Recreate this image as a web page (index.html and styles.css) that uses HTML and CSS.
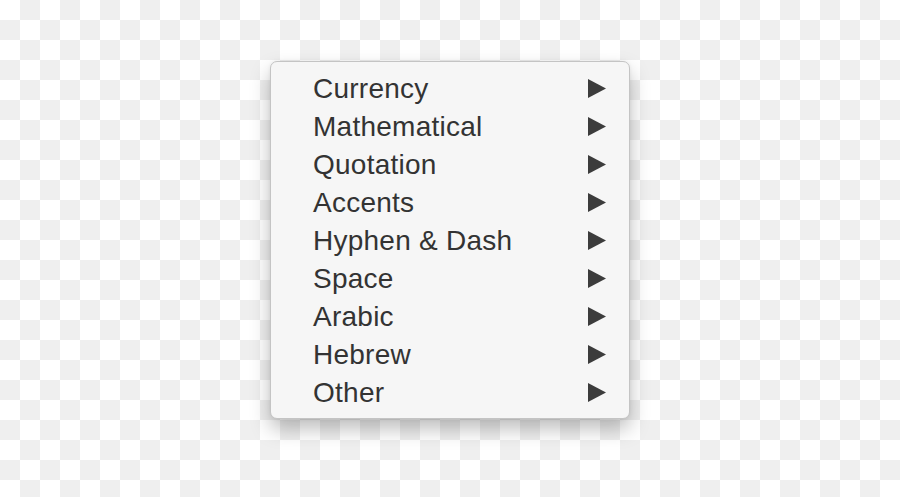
FILE: index.html
```html
<!DOCTYPE html>
<html lang="en">
<head>
<meta charset="utf-8">
<title>Menu</title>
<link rel="stylesheet" href="styles.css">
</head>
<body>
<div class="stage">
  <ul class="menu">
    <li class="item"><span class="label">Currency</span><svg class="arrow" viewBox="0 0 18 19"><polygon points="0,0 18,9.5 0,19"/></svg></li>
    <li class="item"><span class="label">Mathematical</span><svg class="arrow" viewBox="0 0 18 19"><polygon points="0,0 18,9.5 0,19"/></svg></li>
    <li class="item"><span class="label">Quotation</span><svg class="arrow" viewBox="0 0 18 19"><polygon points="0,0 18,9.5 0,19"/></svg></li>
    <li class="item"><span class="label">Accents</span><svg class="arrow" viewBox="0 0 18 19"><polygon points="0,0 18,9.5 0,19"/></svg></li>
    <li class="item"><span class="label">Hyphen &amp; Dash</span><svg class="arrow" viewBox="0 0 18 19"><polygon points="0,0 18,9.5 0,19"/></svg></li>
    <li class="item"><span class="label">Space</span><svg class="arrow" viewBox="0 0 18 19"><polygon points="0,0 18,9.5 0,19"/></svg></li>
    <li class="item"><span class="label">Arabic</span><svg class="arrow" viewBox="0 0 18 19"><polygon points="0,0 18,9.5 0,19"/></svg></li>
    <li class="item"><span class="label">Hebrew</span><svg class="arrow" viewBox="0 0 18 19"><polygon points="0,0 18,9.5 0,19"/></svg></li>
    <li class="item"><span class="label">Other</span><svg class="arrow" viewBox="0 0 18 19"><polygon points="0,0 18,9.5 0,19"/></svg></li>
  </ul>
</div>
</body>
</html>
```

FILE: styles.css
```css
html, body {
  margin: 0;
  padding: 0;
  width: 900px;
  height: 497px;
  overflow: hidden;
}
body {
  background-color: #ffffff;
  background-image: conic-gradient(#efefef 25%, transparent 0 50%, #efefef 0 75%, transparent 0);
  background-size: 40px 40px;
  font-family: "Liberation Sans", Arial, sans-serif;
}
.stage {
  display: flex;
  justify-content: center;
  padding-top: 61px;
}
.menu {
  list-style: none;
  margin: 0;
  width: 358px;
  padding: 7px 0;
  background: #f6f6f6;
  border: 1px solid #c4c4c4;
  border-radius: 7px;
  box-shadow: 0 10px 20px rgba(0, 0, 0, 0.26), 0 0 4px rgba(0, 0, 0, 0.06);
}
.item {
  display: flex;
  align-items: center;
  justify-content: space-between;
  height: 38px;
  padding: 0 23px 0 42px;
}
.label {
  font-size: 28px;
  color: #333333;
  line-height: 38px;
  padding-top: 1px;
  letter-spacing: 0.25px;
}
.arrow {
  width: 18px;
  height: 19px;
  fill: #3c3c3c;
}
```
